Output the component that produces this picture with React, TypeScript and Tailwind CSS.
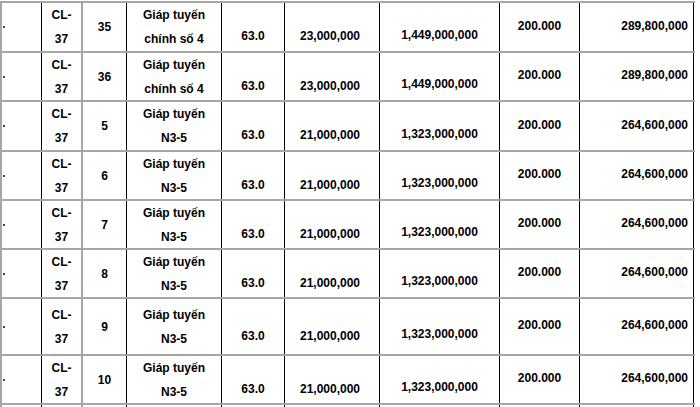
const rows = [
  { no: "35", name: ["Giáp tuyến", "chính số 4"], price: "23,000,000", total: "1,449,000,000", amount: "289,800,000", h: "h-[50px]" },
  { no: "36", name: ["Giáp tuyến", "chính số 4"], price: "23,000,000", total: "1,449,000,000", amount: "289,800,000", h: "h-[49px]" },
  { no: "5", name: ["Giáp tuyến", "N3-5"], price: "21,000,000", total: "1,323,000,000", amount: "264,600,000", h: "h-[50px]" },
  { no: "6", name: ["Giáp tuyến", "N3-5"], price: "21,000,000", total: "1,323,000,000", amount: "264,600,000", h: "h-[49px]" },
  { no: "7", name: ["Giáp tuyến", "N3-5"], price: "21,000,000", total: "1,323,000,000", amount: "264,600,000", h: "h-[49px]" },
  { no: "8", name: ["Giáp tuyến", "N3-5"], price: "21,000,000", total: "1,323,000,000", amount: "264,600,000", h: "h-[49px]" },
  { no: "9", name: ["Giáp tuyến", "N3-5"], price: "21,000,000", total: "1,323,000,000", amount: "264,600,000", h: "h-[57px]" },
  { no: "10", name: ["Giáp tuyến", "N3-5"], price: "21,000,000", total: "1,323,000,000", amount: "264,600,000", h: "h-[49px]" },
];

const cell = "flex items-center justify-center self-stretch border-l border-black";

export default function App() {
  return (
    <div
      className="min-h-[407px] w-[700px] overflow-hidden bg-white text-[12px] font-bold leading-[24px] text-black"
      style={{ fontFamily: '"Liberation Sans", Arial, sans-serif' }}
    >
      <div className="w-[695px] pt-px">
        {rows.map((r, i) => (
          <div key={i} className={`flex border-t-2 border-[#a6a6a6] ${r.h}`}>
            <div className="flex w-[41px] items-center self-stretch border-l-2 border-[#a6a6a6]">
              <span className="ml-px h-[2px] w-[2px] bg-[#444]" />
            </div>
            <div className={`${cell} w-[40px] flex-col`}>
              <span>CL-</span>
              <span>37</span>
            </div>
            <div className="flex w-[45px] items-center justify-center self-stretch border-l-2 border-[#a6a6a6]">
              {r.no}
            </div>
            <div className={`${cell} w-[95px] flex-col`}>
              <span>{r.name[0]}</span>
              <span>{r.name[1]}</span>
            </div>
            <div className={`${cell} w-[63px]`}>
              <span className="mt-[18px]">63.0</span>
            </div>
            <div className={`${cell} w-[95px] pr-[4px]`}>
              <span className="mt-[18px]">{r.price}</span>
            </div>
            <div className={`${cell} w-[120px]`}>
              <span className="mt-[15px]">{r.total}</span>
            </div>
            <div className={`${cell} w-[80px]`}>
              <span className="mb-[3px]">200.000</span>
            </div>
            <div className="flex w-[115px] items-center justify-end self-stretch border-x border-black pr-[5px]">
              <span className="mb-[3px]">{r.amount}</span>
            </div>
          </div>
        ))}
        <div className="flex h-[4px] border-t-2 border-[#a6a6a6]">
          <div className="w-[41px] border-l-2 border-[#a6a6a6]" />
          <div className="w-[40px] border-l border-black" />
          <div className="w-[45px] border-l-2 border-[#a6a6a6]" />
          <div className="w-[95px] border-l border-black" />
          <div className="w-[63px] border-l border-black" />
          <div className="w-[95px] border-l border-black" />
          <div className="w-[120px] border-l border-black" />
          <div className="w-[80px] border-l border-black" />
          <div className="w-[115px] border-x border-black" />
        </div>
      </div>
    </div>
  );
}
